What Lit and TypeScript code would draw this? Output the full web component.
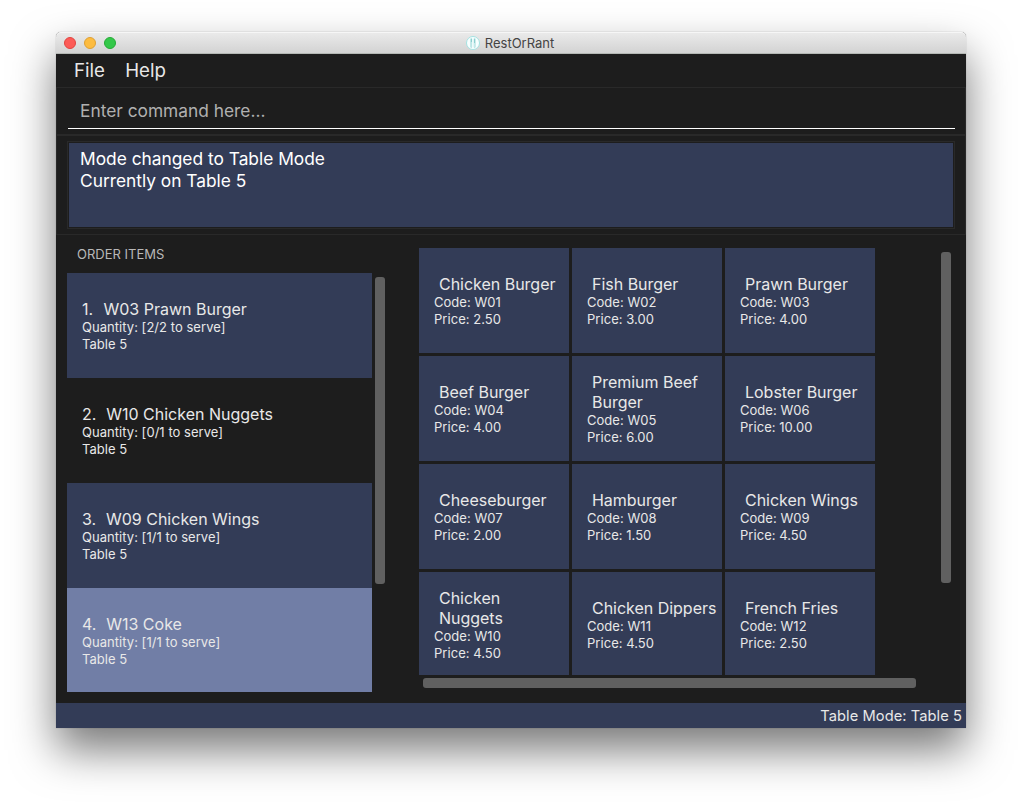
import { LitElement, html, css } from "lit";
import { customElement } from "lit/decorators.js";

interface Order { label: string; index: number; quantity: string; selected?: boolean }
interface Dish { name: string; code: string; price: string }

const orders: Order[] = [
  { index: 1, label: "W03 Prawn Burger", quantity: "2/2" },
  { index: 2, label: "W10 Chicken Nuggets", quantity: "0/1" },
  { index: 3, label: "W09 Chicken Wings", quantity: "1/1" },
  { index: 4, label: "W13 Coke", quantity: "1/1", selected: true },
];

const dishes: Dish[] = [
  { name: "Chicken Burger", code: "W01", price: "2.50" },
  { name: "Fish Burger", code: "W02", price: "3.00" },
  { name: "Prawn Burger", code: "W03", price: "4.00" },
  { name: "Beef Burger", code: "W04", price: "4.00" },
  { name: "Premium Beef\nBurger", code: "W05", price: "6.00" },
  { name: "Lobster Burger", code: "W06", price: "10.00" },
  { name: "Cheeseburger", code: "W07", price: "2.00" },
  { name: "Hamburger", code: "W08", price: "1.50" },
  { name: "Chicken Wings", code: "W09", price: "4.50" },
  { name: "Chicken\nNuggets", code: "W10", price: "4.50" },
  { name: "Chicken Dippers", code: "W11", price: "4.50" },
  { name: "French Fries", code: "W12", price: "2.50" },
];

@customElement("app-root")
export class AppRoot extends LitElement {
  static styles = css`
    :host { display: block; box-sizing: border-box; height: 808px; padding: 32px 56px 0; background: #fff; overflow: hidden; font-family: Inter, sans-serif; color: #e8e8e8; }
    * { box-sizing: border-box; }
    .window { width: 910px; height: 696px; display: flex; flex-direction: column; background: #1d1d1d; border-radius: 5px 5px 0 0; box-shadow: 0 0 1px rgba(0,0,0,.45), 0 22px 44px rgba(0,0,0,.53); }
    .title { height: 22px; flex: none; display: grid; grid-template-columns: 1fr auto 1fr; align-items: center; padding: 0 10px 0 8px; border-radius: 5px 5px 0 0; background: linear-gradient(#ebebeb, #d3d3d3); border-bottom: 1px solid #b4b8b4; box-shadow: inset 0 1px #f6f6f6; }
    .lights { display: flex; gap: 8px; }
    .light { width: 12px; height: 12px; border-radius: 50%; border: 1px solid; }
    .red { background: #fc5b57; border-color: #e2443f; }
    .amber { background: #fdbc40; border-color: #dfa033; }
    .green { background: #34c84a; border-color: #25ab35; }
    .caption { display: flex; align-items: center; gap: 5px; font-size: 13px; color: #444; }
    .menu { height: 33px; flex: none; display: flex; align-items: center; gap: 20.3px; padding-left: 18px; font-size: 18.67px; }
    .command { height: 48px; flex: none; border: 1px solid #292929; padding: 0 10px 6px 11px; }
    .field { height: 41px; border-bottom: 1px solid #fff; padding-left: 12px; line-height: 46px; font-size: 17.33px; color: #b0b0b0; }
    .result { height: 100px; flex: none; border: 1px solid #292929; padding: 5px 10px 6px; }
    .outline { height: 88px; border: 1px solid #292929; padding: 1px; }
    .message { height: 84px; background: #333c57; color: #fff; padding: 5px 11px; font-size: 17.33px; line-height: 22px; white-space: pre; }
    .main { flex: 1; min-height: 0; display: flex; padding-left: 11px; }
    .orders { width: 305px; }
    .heading { height: 38px; padding: 11px 0 0 10px; line-height: 16px; font-size: 13px; color: #b8b8b8; }
    .list { height: 419px; overflow: hidden; }
    .order, .dish { height: 105px; display: flex; flex-direction: column; justify-content: center; padding-left: 15px; }
    .order:nth-child(odd) { background: #333c57; }
    .order.selected { background: #717ea6; }
    .name { font-size: 16px; line-height: 20px; white-space: pre; }
    .index { display: inline-block; min-width: 21.5px; padding-right: .8px; }
    .small { font-size: 13px; line-height: 17px; letter-spacing: .04px; white-space: pre; }
    .thumb { background: #606060; border-radius: 3px; }
    .vlist { width: 10px; height: 307px; margin: 42px 34px 0 3px; }
    .browse { display: flex; flex-direction: column; width: 522px; padding-top: 13px; }
    .grid { height: 427px; width: 456px; overflow: hidden; display: grid; grid-template-columns: repeat(3, 150px); grid-auto-rows: 105px; gap: 3px; }
    .dish { background: #333c57; }
    .dish .name { padding-left: 5px; letter-spacing: -.02px; }
    .hbar { width: 493px; height: 10px; margin: 3px 0 0 4px; }
    .vgrid { width: 10px; height: 331px; margin-top: 17px; }
    .status { height: 25px; flex: none; background: #333c57; text-align: right; padding-right: 4px; font-size: 14.67px; letter-spacing: .07px; line-height: 27px; }
  `;

  render() {
    return html`
      <div class="window">
        <div class="title">
          <div class="lights"><i class="light red"></i><i class="light amber"></i><i class="light green"></i></div>
          <div class="caption">
            <svg width="14" height="14" viewBox="0 0 14 14"><circle cx="7" cy="7" r="6.5" fill="#f8ffff" stroke="#a4e2e2"/><path d="M5.3 2.5v3M5.3 5v6.5" fill="none" stroke="#8ccfcf" stroke-width="1.6"/><path d="M8.6 2.5v9" fill="none" stroke="#8ccfcf" stroke-width="1.6"/><path d="M5.3 6v5M8.6 7v4" stroke="#d8f2f2" stroke-width=".8"/></svg>
            <span>RestOrRant</span>
          </div>
        </div>
        <div class="menu"><span>File</span><span>Help</span></div>
        <div class="command"><div class="field">Enter command here...</div></div>
        <div class="result"><div class="outline"><div class="message">Mode changed to Table Mode
Currently on Table 5</div></div></div>
        <div class="main">
          <div class="orders">
            <div class="heading">ORDER ITEMS</div>
            <div class="list">${orders.map((o) => html`
              <div class="order ${o.selected ? "selected" : ""}">
                <div class="name"><span class="index">${o.index}.  </span>${o.label}</div>
                <div class="small">Quantity: [${o.quantity} to serve]</div>
                <div class="small">Table 5</div>
              </div>`)}</div>
          </div>
          <div class="thumb vlist"></div>
          <div class="browse">
            <div class="grid">${dishes.map((d) => html`
              <div class="dish">
                <div class="name">${d.name}</div>
                <div class="small">Code: ${d.code}</div>
                <div class="small">Price: ${d.price}</div>
              </div>`)}</div>
            <div class="thumb hbar"></div>
          </div>
          <div class="thumb vgrid"></div>
        </div>
        <div class="status">Table Mode: Table 5</div>
      </div>`;
  }
}
